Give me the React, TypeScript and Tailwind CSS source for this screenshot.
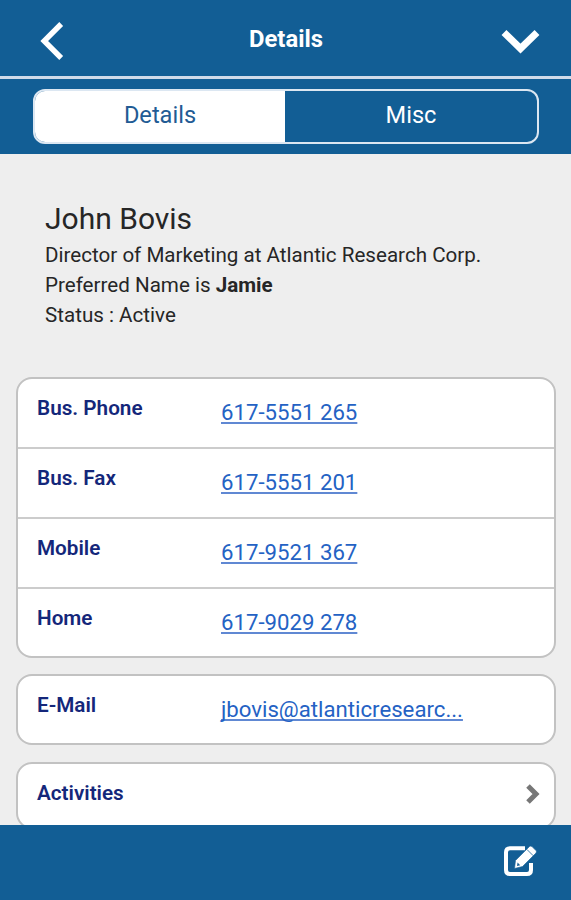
import React from 'react';

export default function App() {
  const phones = [
    { label: 'Bus. Phone', value: '617-5551 265' },
    { label: 'Bus. Fax', value: '617-5551 201' },
    { label: 'Mobile', value: '617-9521 367' },
    { label: 'Home', value: '617-9029 278' },
  ];

  return (
    <div className="flex h-[900px] w-full flex-col overflow-hidden bg-[#eeeeee] font-['Roboto',sans-serif] text-[#262626]">
      <header className="flex h-[79px] shrink-0 items-start justify-between border-b-3 border-[#cfdbea] bg-[#125e95] pl-[38px] pr-[28px]">
        <button className="mt-5 w-[45px]" aria-label="Back">
          <svg width="28" height="42" viewBox="0 0 28 42" fill="none">
            <path d="M23.2 4L6.2 21L23.2 38" stroke="#fff" strokeWidth="5.4" />
          </svg>
        </button>
        <h1 className="mt-[23px] mr-[9px] w-[84px] text-center text-[23.8px] leading-8 font-bold text-white">
          Details
        </h1>
        <button className="mt-[25px]" aria-label="Menu">
          <svg width="45" height="32" viewBox="0 0 45 32" fill="none">
            <path
              d="M6 7.5L22.5 23.5L39 7.5"
              stroke="#fff"
              strokeWidth="7"
            />
          </svg>
        </button>
      </header>

      <nav className="h-[75px] shrink-0 bg-[#125e95] pt-[10px] pr-8 pl-[33px]">
        <div className="flex h-[55px] overflow-hidden rounded-xl border-2 border-[#dce7f2] text-[23.6px]">
          <button className="w-[250px] bg-white pb-0.5 text-[#225b94]">
            Details
          </button>
          <button className="flex-1 pb-0.5 text-white">Misc</button>
        </div>
      </nav>

      <main className="min-h-0 flex-1 overflow-hidden pr-[15px] pl-4">
        <section className="h-[223px] pt-[45px] pl-[29px] text-[20.6px] leading-[30px]">
          <h2 className="mb-px text-[30px] leading-[40px]">John Bovis</h2>
          <p>Director of Marketing at Atlantic Research Corp.</p>
          <p>
            Preferred Name is <b>Jamie</b>
          </p>
          <p>Status : Active</p>
        </section>

        <ul className="mb-4 rounded-2xl border-2 border-[#c2c2c2] bg-white">
          {phones.map((phone) => (
            <li
              key={phone.label}
              className="flex h-[70px] border-b-2 border-[#cccccc] pl-[19px] last:h-[67px] last:border-b-0"
            >
              <Label>{phone.label}</Label>
              <Value>{phone.value}</Value>
            </li>
          ))}
        </ul>

        <div className="mb-[17px] flex h-[71px] rounded-2xl border-2 border-[#c2c2c2] bg-white pl-[19px]">
          <Label>E-Mail</Label>
          <Value>jbovis@atlanticresearc...</Value>
        </div>

        <div className="flex h-[67px] justify-between rounded-2xl border-2 border-[#c2c2c2] bg-white pr-[12px] pl-[19px]">
          <Label>Activities</Label>
          <svg
            className="mt-[18px]"
            width="18"
            height="24"
            viewBox="0 0 18 24"
            fill="none"
          >
            <path d="M4 4L12 12L4 20" stroke="#777" strokeWidth="5" />
          </svg>
        </div>
      </main>

      <footer className="flex h-[75px] shrink-0 justify-end bg-[#125e95] pt-5 pr-[33px]">
        <button className="h-8" aria-label="Edit">
          <svg width="36" height="32" viewBox="0 0 36 32" fill="none">
            <path
              d="M23 3.2H8Q4 3.2 4 7.2V25Q4 29 8 29H25Q29 29 29 25V18"
              stroke="#fff"
              strokeWidth="4"
            />
            <path
              d="M13.5 15.5L27.5 1.5Q28.8 0.6 30 1.6L34 5.6Q35 6.8 34 8L20.5 21.5L12.5 23.5Z"
              fill="#fff"
              stroke="#125e95"
              strokeWidth="0.6"
            />
            <path d="M25 4.5L31.2 10.7" stroke="#125e95" strokeWidth="0.8" />
            <path d="M15.6 17.6L18.2 20.2L15 21Z" fill="#125e95" />
          </svg>
        </button>
      </footer>
    </div>
  );
}

function Label({ children }: { children: React.ReactNode }) {
  return (
    <span className="w-[184px] shrink-0 pt-[15px] text-[20.7px] leading-[28px] font-semibold text-[#14277a]">
      {children}
    </span>
  );
}

function Value({ children }: { children: React.ReactNode }) {
  return (
    <a
      href="#"
      className="pt-[18px] text-[22.2px] leading-[30px] text-[#2462c4] underline decoration-[#6088d3] decoration-2 underline-offset-2 [text-decoration-skip-ink:none]"
    >
      {children}
    </a>
  );
}
